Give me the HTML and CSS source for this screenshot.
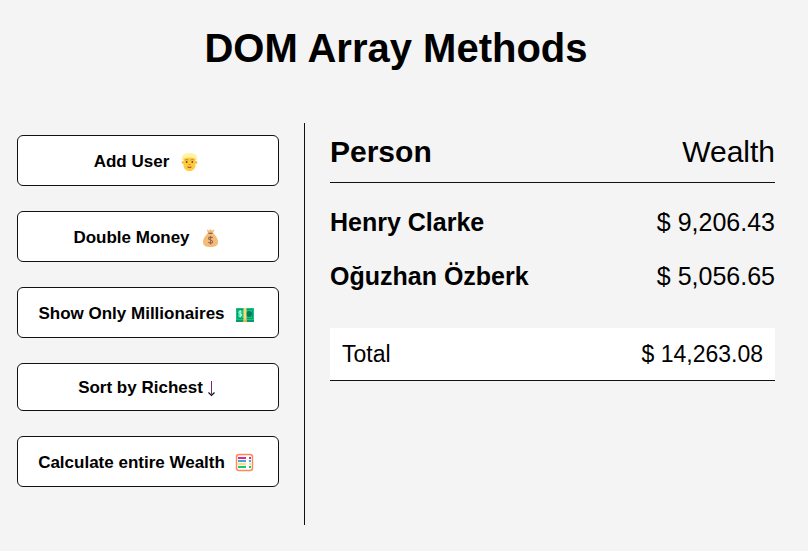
FILE: index.html
```html
<!DOCTYPE html>
<html lang="en">
<head>
<meta charset="utf-8">
<meta name="viewport" content="width=device-width, initial-scale=1">
<title>DOM Array Methods</title>
<link rel="stylesheet" href="styles.css">
</head>
<body>
<h1 class="title">DOM Array Methods</h1>
<div class="container">
  <aside class="actions">
    <button class="action" type="button">Add User
      <svg class="icon" viewBox="0 -1 25 25" aria-hidden="true">
        <path d="M5 10C4 5 7 3 12.500 3s8.500 2 7.500 7z" fill="#fff3a6"/>
        <circle cx="6" cy="12.500" r="1.300" fill="#f4b51e"/><circle cx="19" cy="12.500" r="1.300" fill="#f4b51e"/>
        <path d="M6.500 8.500q6-2 12 0V15c0 4-3 6-6 6s-6-2-6-6z" fill="#ffcc3b"/>
        <path d="M8 10q2-1 3.500 0M13.500 10q2-1 3.500 0" fill="none" stroke="#d78035" stroke-width="1"/>
        <circle cx="9.700" cy="12" r=".9" fill="#624035"/><circle cx="15.300" cy="12" r=".9" fill="#624035"/>
        <path d="M11.500 14.500h2" stroke="#dd8b20" stroke-width="1"/>
        <path d="M10.500 17q2 1.500 4 0z" fill="#b54b32" stroke="#b54b32" stroke-width=".6"/>
      </svg>
    </button>
    <button class="action" type="button">Double Money
      <svg class="icon" viewBox="0 -1 25 25" aria-hidden="true">
        <path d="M10 7 8.500 3.500l3 1 1-1.500 1 1.500 3-1L15 7z" fill="#f3bd79"/>
        <path d="M10 7h5c2 2 5 5 5 9 0 4-3 5-7.500 5S5 20 5 16c0-4 3-7 5-9z" fill="#f3bd79"/>
        <path d="M10.500 7.300h4" stroke="#8c5a45" stroke-width="1.200"/>
        <path d="M14.700 12c-1-1.200-4.200-1.200-4.200.5 0 2 4.200 1.100 4.200 3.200 0 1.800-3.400 1.800-4.400.5M12.500 10v8.500" fill="none" stroke="#9a6650" stroke-width="1.100"/>
      </svg>
    </button>
    <button class="action" type="button">Show Only Millionaires
      <svg class="icon" viewBox="0 -1 25 25" aria-hidden="true">
        <path d="M3 17h18v3H3z" fill="#079b68"/>
        <path d="M3 6h18v12H3z" fill="#12c785"/>
        <path d="M4.500 7.500h15v9h-15z" fill="none" stroke="#0a9c69" stroke-width="1"/>
        <circle cx="16" cy="12" r="3" fill="#087a57"/>
        <path d="M8.500 10c-.8-1-2.700-.8-2.700.4 0 1.700 2.900.9 2.900 2.600 0 1.400-2.300 1.400-3.100.3M7.200 8.200v7" fill="none" stroke="#d5fff0" stroke-width=".9"/>
        <path d="M10.500 6h3v14h-3z" fill="#ffd978"/><path d="M10.500 17.500h3V20h-3z" fill="#eeb33f"/>
      </svg>
    </button>
    <button class="action" type="button">Sort by Richest
      <svg class="arrow" viewBox="0 0 14 22" aria-hidden="true">
        <path d="M7 4h1v13H7z" fill="#80208a"/>
        <path d="M4.500 15.500 7.500 18.500 10.500 15.500" fill="none" stroke="#111" stroke-width="1.200"/>
      </svg>
    </button>
    <button class="action" type="button">Calculate entire Wealth
      <svg class="icon" viewBox="0 -1 25 25" aria-hidden="true">
        <rect x="3.500" y="3.500" width="16" height="16" rx="2.500" fill="#fff" stroke="#ff8758" stroke-width="1.400"/>
        <path d="M5 7h8M16 7h2" stroke="#e72489" stroke-width="2"/>
        <path d="M5 10h8M16 10h2" stroke="#35a9e8" stroke-width="2"/>
        <path d="M5 13h8M16 13h2" stroke="#ffd44a" stroke-width="1.700"/>
        <path d="M5 16h8M16 16h2" stroke="#19c877" stroke-width="2"/>
        <path d="M5 8.500h13M5 11.500h13M5 14.500h13" stroke="#eee" stroke-width=".5"/>
      </svg>
    </button>
  </aside>
  <main class="main">
    <table class="wealth">
      <thead>
        <tr><th scope="col">Person</th><th scope="col" class="amount">Wealth</th></tr>
      </thead>
      <tbody>
        <tr><th scope="row">Henry Clarke</th><td class="amount">$ 9,206.43</td></tr>
        <tr><th scope="row">Oğuzhan Özberk</th><td class="amount">$ 5,056.65</td></tr>
      </tbody>
      <tfoot>
        <tr><th scope="row">Total</th><td class="amount">$ 14,263.08</td></tr>
      </tfoot>
    </table>
  </main>
</div>
</body>
</html>
```
FILE: styles.css
```css
* { box-sizing: border-box; }

body {
  margin: 0;
  padding: 25px 33px 25px 17px;
  background: #f4f4f4;
  color: #000;
  font-family: Arial, "Liberation Sans", sans-serif;
}

.title {
  margin: 0 0 52px;
  font-size: 40px;
  line-height: 46px;
  text-align: center;
}

.container {
  display: grid;
  grid-template-columns: minmax(0, 287fr) minmax(0, 471fr);
}

.actions {
  display: flex;
  flex-direction: column;
  gap: 25px;
  padding: 12px 25px 38px 0;
}

.action {
  display: flex;
  align-items: center;
  justify-content: center;
  gap: 8px;
  padding: 13px 12px 11px;
  border: 1px solid #111;
  border-radius: 6px;
  background: #fff;
  color: #000;
  font: bold 17px/22px Arial, "Liberation Sans", sans-serif;
  white-space: nowrap;
  cursor: pointer;
}

.icon {
  flex: none;
  width: 25px;
  height: 25px;
}

.arrow {
  flex: none;
  width: 14px;
  height: 22px;
  margin-left: -7px;
}

.main {
  padding-left: 25px;
  border-left: 1px solid #111;
}

.wealth {
  width: 100%;
  border-spacing: 0;
  font-size: 25px;
  line-height: 30px;
}

.wealth th,
.wealth td {
  padding: 12px 0;
  text-align: left;
}

.wealth .amount {
  font-weight: normal;
  text-align: right;
}

.wealth thead th {
  padding: 11px 0 13px;
  border-bottom: 1px solid #111;
  font-size: 30px;
  line-height: 35px;
}

.wealth tbody tr:first-child > * { padding-top: 24px; }

.wealth tbody tr:last-child > * { padding-bottom: 37px; }

.wealth tfoot th,
.wealth tfoot td {
  padding: 12px;
  border-bottom: 1px solid #111;
  background: #fff;
  font-size: 23px;
  font-weight: normal;
  line-height: 28px;
}
```
